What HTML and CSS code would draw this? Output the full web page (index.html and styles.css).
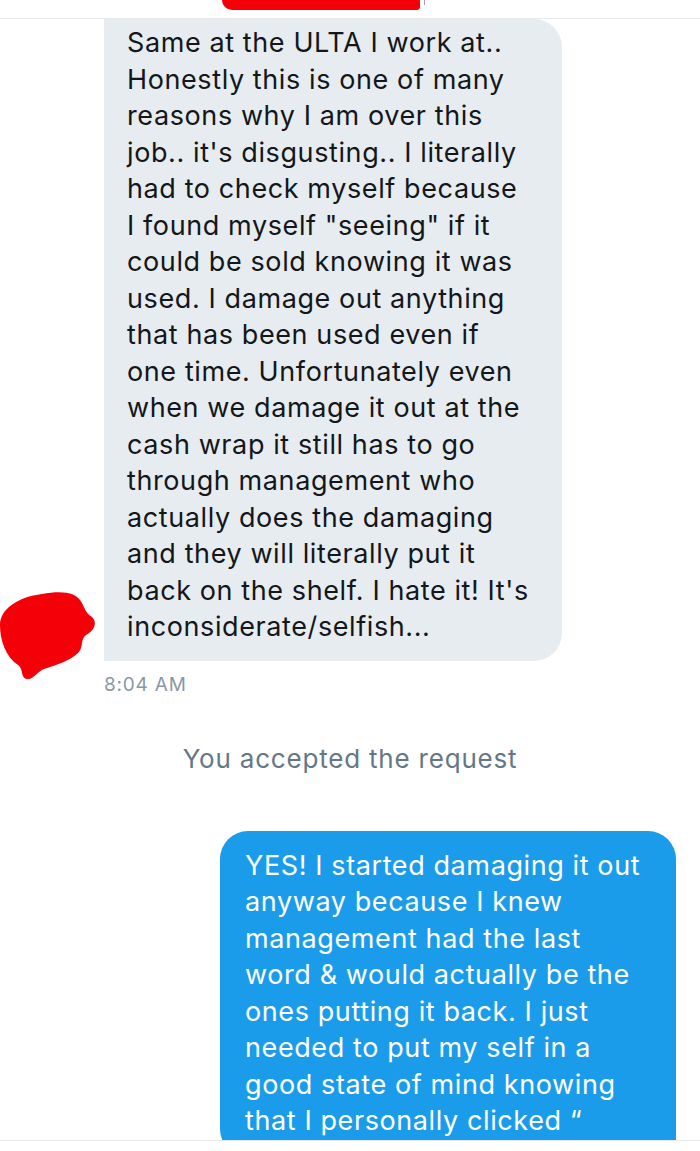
FILE: index.html
```html
<!DOCTYPE html>
<html lang="en">

<head>
    <meta charset="UTF-8">
    <meta name="viewport" content="width=device-width, initial-scale=1.0">
    <title>Messages</title>
    <link rel="stylesheet" href="styles.css">
</head>

<body>
    <header id="top-bar">
        <div class="scribble-top"></div>
        <div class="top-tick"></div>
    </header>

    <main id="thread">
        <div class="msg-row incoming">
            <svg class="scribble-avatar" width="100" height="96" viewBox="0 0 100 96">
                <path d="M2 36 C2 20 20 8 44 5 C62 2 78 2 84 14 C88 22 88 24 94 28 C100 34 96 42 88 46 C82 50 86 58 80 64 C72 72 58 76 46 80 C40 82 36 90 30 90 C22 90 26 80 20 76 C8 68 2 52 2 36 Z" fill="#f40009" />
            </svg>
            <div class="bubble gray">
                Same at the ULTA I work at..<br>
                Honestly this is one of many<br>
                reasons why I am over this<br>
                job.. it's disgusting.. I literally<br>
                had to check myself because<br>
                I found myself "seeing" if it<br>
                could be sold knowing it was<br>
                used. I damage out anything<br>
                that has been used even if<br>
                one time. Unfortunately even<br>
                when we damage it out at the<br>
                cash wrap it still has to go<br>
                through management who<br>
                actually does the damaging<br>
                and they will literally put it<br>
                back on the shelf. I hate it! It's<br>
                inconsiderate/selfish...
            </div>
        </div>
        <p class="timestamp">8:04 AM</p>

        <p class="notice">You accepted the request</p>

        <div class="msg-row outgoing">
            <div class="bubble blue">
                YES! I started damaging it out<br>
                anyway because I knew<br>
                management had the last<br>
                word &amp; would actually be the<br>
                ones putting it back. I just<br>
                needed to put my self in a<br>
                good state of mind knowing<br>
                that I personally clicked &ldquo;
            </div>
        </div>
    </main>

    <footer id="bottom-bar"></footer>
</body>

</html>
```

FILE: styles.css
```css
body {
    margin: 0;
    height: 1151px;
    background-color: #ffffff;
    display: flex;
    flex-direction: column;
    font-family: Inter, "Liberation Sans", sans-serif;
    overflow: hidden;
}

#top-bar {
    position: relative;
    height: 18px;
    flex-shrink: 0;
    border-bottom: 1px solid #e6e9ec;
}

.scribble-top {
    position: absolute;
    left: 222px;
    top: 0;
    width: 198px;
    height: 10px;
    background-color: #f40009;
    border-radius: 0 0 14px 40px;
}

.top-tick {
    position: absolute;
    left: 424px;
    top: 0;
    width: 1px;
    height: 5px;
    background-color: #9aa5ae;
}

#thread {
    flex: 1;
    overflow: hidden;
}

.msg-row {
    display: flex;
}

.incoming {
    position: relative;
    padding-left: 104px;
}

.outgoing {
    justify-content: flex-end;
    padding-right: 24px;
}

.scribble-avatar {
    position: absolute;
    left: -2px;
    top: 570px;
}

.bubble {
    font-size: 27px;
    line-height: 36.5px;
    letter-spacing: 0.6px;
    white-space: nowrap;
}

.gray {
    width: 458px;
    box-sizing: border-box;
    padding: 6px 0 15px 23px;
    background-color: #e6ecf0;
    color: #14171a;
    border-radius: 0 28px 28px 0;
}

.blue {
    width: 456px;
    box-sizing: border-box;
    padding: 17px 0 17px 25px;
    background-color: #1b9ceb;
    color: #ffffff;
    border-radius: 28px 28px 0 28px;
}

.timestamp {
    margin: 12px 0 0 104px;
    font-size: 19px;
    line-height: 24px;
    letter-spacing: 0.8px;
    color: #8899a6;
}

.notice {
    margin: 47px 0 57px 0;
    text-align: center;
    font-size: 26px;
    line-height: 30px;
    letter-spacing: 0.8px;
    color: #657786;
}

#bottom-bar {
    height: 10px;
    flex-shrink: 0;
    border-top: 1px solid #e6e9ec;
    background-color: #ffffff;
}
```
